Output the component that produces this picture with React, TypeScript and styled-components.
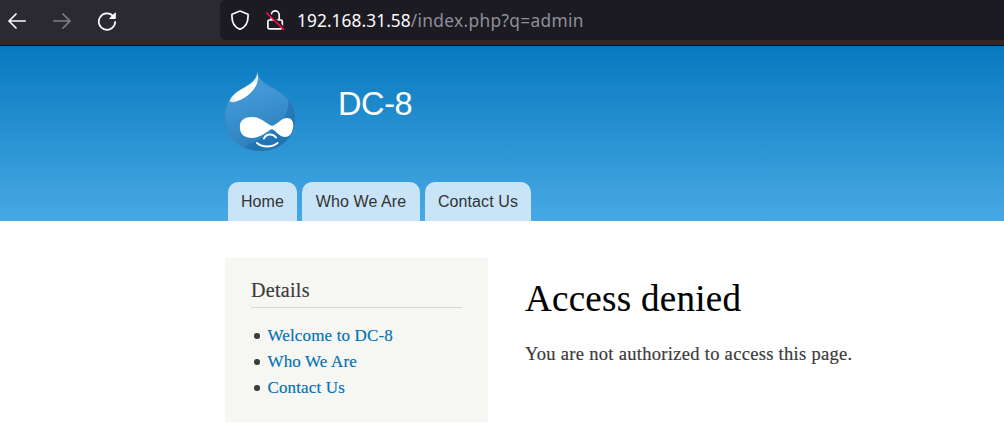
import React from "react";
import styled, { createGlobalStyle } from "styled-components";

const GlobalStyle = createGlobalStyle`
  * { box-sizing: border-box; }
  body { margin: 0; background: #fff; overflow: hidden; }
`;

const serif = `"Liberation Serif", Georgia, serif`;
const sans = `"Liberation Sans", Arial, sans-serif`;

const Page = styled.div`
  width: 1004px;
  height: 430px;
  overflow: hidden;
  display: flex;
  flex-direction: column;
`;

const Toolbar = styled.div`
  height: 46px;
  flex: none;
  display: flex;
  align-items: flex-start;
  background: #2b2a33;
  border-bottom: 1px solid #0c0c0d;
`;

const NavButtons = styled.div`
  width: 220px;
  height: 41px;
  padding-left: 7px;
  display: flex;
  align-items: center;
  gap: 25px;
`;

const NavIcon = styled.svg`
  width: 20px;
  height: 20px;
  fill: none;
  stroke: #fbfbfe;
  stroke-width: 1.7;
  stroke-linecap: round;
  stroke-linejoin: round;
`;

const AddressBar = styled.div`
  flex: 1;
  height: 40px;
  padding-left: 10px;
  display: flex;
  align-items: center;
  gap: 15px;
  background: #1c1b22;
  border-radius: 5px 0 0 5px;
`;

const Url = styled.span`
  margin-left: -3px;
  padding-top: 2px;
  font: 17.3px/24px "Noto Sans", "Segoe UI", sans-serif;
  letter-spacing: 0.33px;
  color: #8f8f9a;
  white-space: pre;
`;

const Host = styled.span`
  letter-spacing: 0.08px;
  color: #fbfbfe;
`;

const Header = styled.header`
  height: 175px;
  flex: none;
  padding: 25px 0 0 224px;
  display: flex;
  flex-direction: column;
  justify-content: space-between;
  background: linear-gradient(#0779bf, #48a9e4);
`;

const Brand = styled.div`
  display: flex;
  align-items: flex-start;
  gap: 41px;
`;

const Logo = styled.svg`
  width: 73px;
  height: 82px;
`;

const SiteName = styled.div`
  padding-top: 14px;
  font: 32.5px/38px ${sans};
  letter-spacing: -0.4px;
  color: #fff;
`;

const Tabs = styled.nav`
  display: flex;
  gap: 5px;
  padding-left: 4px;
`;

const Tab = styled.a<{ $width: number }>`
  width: ${(p) => p.$width}px;
  height: 39px;
  border-radius: 10px 10px 0 0;
  background: #c8e4f6;
  color: #333;
  font: 16px/39px ${sans};
  letter-spacing: 0.1px;
  text-align: center;
  white-space: nowrap;
`;

const Content = styled.main`
  display: flex;
  align-items: flex-start;
  padding: 37px 0 0 225px;
  gap: 37px;
`;

const Sidebar = styled.aside`
  width: 263px;
  height: 164px;
  padding: 20px 26px;
  background: #f6f6f2;
`;

const BlockTitle = styled.h2`
  margin: 0 0 15px;
  height: 30px;
  border-bottom: 1px solid #d6d6d6;
  font: 20px/24px ${serif};
  letter-spacing: 0.3px;
  -webkit-text-stroke: 0.2px currentColor;
  color: #3b3b3b;
`;

const Links = styled.ul`
  margin: 0;
  padding: 0;
  list-style: none;
`;

const LinkRow = styled.li`
  display: flex;
  align-items: center;
  gap: 8px;
  height: 26px;
  padding-left: 3px;
  &::before {
    content: "";
    width: 5.5px;
    height: 5.5px;
    border-radius: 50%;
    background: #3b3b3b;
  }
`;

const Link = styled.a`
  color: #0071b3;
  font: 17px/26px ${serif};
  letter-spacing: 0.14px;
  -webkit-text-stroke: 0.15px currentColor;
`;

const Article = styled.section`
  padding-top: 19px;
`;

const Title = styled.h1`
  margin: 0 0 12px;
  font: 37px/44px ${serif};
  letter-spacing: 0.27px;
  -webkit-text-stroke: 0.15px currentColor;
  color: #000;
`;

const Message = styled.p`
  margin: 0;
  font: 18.5px/42px ${serif};
  letter-spacing: 0.3px;
  -webkit-text-stroke: 0.2px currentColor;
  color: #3b3b3b;
`;

function DropletLogo() {
  return (
    <Logo viewBox="0 0 73 82">
      <defs>
        <linearGradient id="drop" x1="0" y1="0" x2="0.3" y2="1">
          <stop offset="0" stopColor="#4ba3dc" />
          <stop offset="0.5" stopColor="#3d93d0" />
          <stop offset="1" stopColor="#2b7fbd" />
        </linearGradient>
        <linearGradient id="shine" x1="1" y1="0" x2="0" y2="1">
          <stop offset="0" stopColor="#fff" stopOpacity="0.7" />
          <stop offset="0.3" stopColor="#fff" />
          <stop offset="0.8" stopColor="#fff" />
          <stop offset="1" stopColor="#fff" stopOpacity="0.7" />
        </linearGradient>
      </defs>
      <path d="M33.500 0.500C35 9 40 12 49 17C62 24 71 33 71 48C71 67 56 80 36 80C16 80 0.800 66 0.800 46C0.800 33 7 25 17 18C26 12 32 10 33.500 0.500Z" fill="url(#drop)" stroke="#3a86ba" strokeWidth="0.8" />
      <path d="M64 29C66 45 53 63 20 75.500C25 79 31 80 36 80C56 80 71 67 71 48C71 40 69 34 64 29Z" fill="#1d6ead" opacity="0.6" />
      <path d="M33.500 1.500C32.500 10 25 14 17 18.500C10 22.500 6 27 5.500 30.500C8 32.500 14 30.500 20 27C29 21.500 36 13 33.500 1.500Z" fill="url(#shine)" />
      <path d="M16 57C15 50 20 46 28 46C37 46 42 53 48 55C53 54 57 47 63 47C68.500 47 70 52 69 57C68 63 65 66 61 66C55.500 66 52 60 48 58C43 60 37 67 28 67C21 67 16 63.500 16 57Z" fill="#fff" />
      <path d="M40 67.500C42 62.500 49 62 52 66.500" fill="none" stroke="#fff" strokeWidth="2" strokeLinecap="round" />
      <path d="M33 72C39 77 48 76.500 53.500 72" fill="none" stroke="#fff" strokeWidth="2" strokeLinecap="round" />
    </Logo>
  );
}

export default function App() {
  return (
    <Page>
      <GlobalStyle />
      <Toolbar>
        <NavButtons>
          <NavIcon viewBox="0 0 20 20">
            <path d="M18.200 10H2M9 3L2 10L9 17" />
          </NavIcon>
          <NavIcon viewBox="0 0 20 20" opacity="0.4">
            <path d="M1.800 10H18M11 3L18 10L11 17" />
          </NavIcon>
          <NavIcon viewBox="0 0 20 20">
            <path d="M16.400 5.500A8.200 8.200 0 1 0 18.200 10.800" />
            <path d="M18.300 2.300V7.500H13Z" fill="#fbfbfe" strokeWidth="1" />
          </NavIcon>
        </NavButtons>
        <AddressBar>
          <NavIcon viewBox="0 0 20 20">
            <path d="M10 1L18 4.200C18.500 11 16 17 10 19.300C4 17 1.500 11 2 4.200Z" />
          </NavIcon>
          <NavIcon viewBox="0 0 20 20">
            <path d="M6.200 10V5A4 4.200 0 0 1 14.200 5V10M4.500 10H15.700Q17.300 10 17.300 11.500V17.300Q17.300 18.900 15.700 18.900H4.500Q2.900 18.900 2.900 17.300V11.500Q2.900 10 4.500 10Z" />
            <path d="M3 2.500L19.200 18.200" stroke="#1c1b22" strokeWidth="2" />
            <path d="M1.800 3L18.500 19.300" stroke="#f40b45" />
          </NavIcon>
          <Url><Host>192.168.31.58</Host>/index.php?q=admin</Url>
        </AddressBar>
      </Toolbar>
      <Header>
        <Brand>
          <DropletLogo />
          <SiteName>DC-8</SiteName>
        </Brand>
        <Tabs>
          <Tab $width={69}>Home</Tab>
          <Tab $width={118}>Who We Are</Tab>
          <Tab $width={106}>Contact Us</Tab>
        </Tabs>
      </Header>
      <Content>
        <Sidebar>
          <BlockTitle>Details</BlockTitle>
          <Links>
            <LinkRow><Link>Welcome to DC-8</Link></LinkRow>
            <LinkRow><Link>Who We Are</Link></LinkRow>
            <LinkRow><Link>Contact Us</Link></LinkRow>
          </Links>
        </Sidebar>
        <Article>
          <Title>Access denied</Title>
          <Message>You are not authorized to access this page.</Message>
        </Article>
      </Content>
    </Page>
  );
}
